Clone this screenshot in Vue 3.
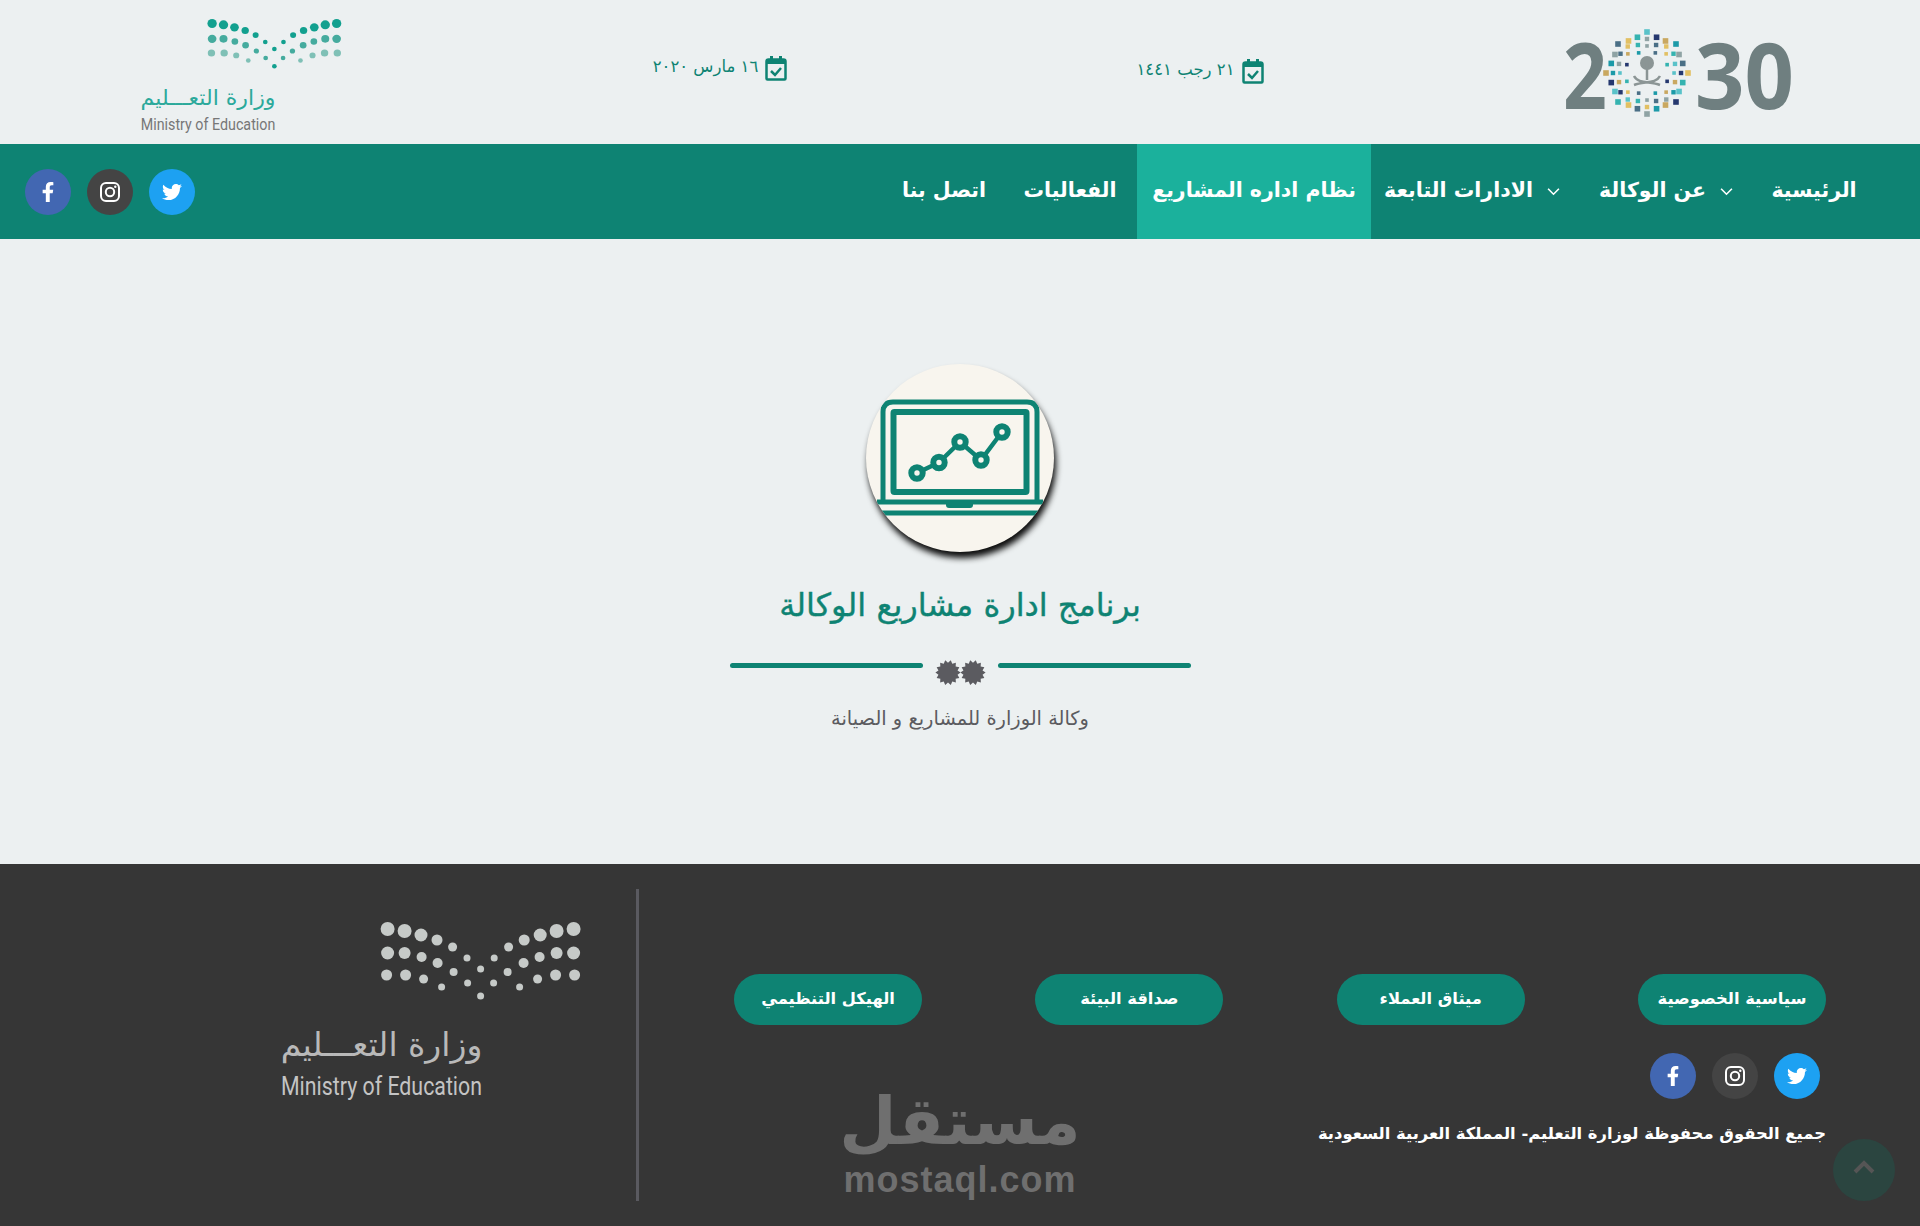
<script setup>
const half = [
  [93, 0, 7], [76, 2, 7], [59.6, 6, 6.5], [43.6, 11, 5.5], [28, 18, 4.5], [13.6, 29, 3.5],
  [93, 24, 6.5], [76, 24, 6], [59, 28, 5], [43, 34, 5], [27, 43, 4], [13, 54, 3.5],
  [94, 46, 5.5], [75, 46, 5.5], [57, 50, 4.5], [39, 58, 3.5]
]
const logoDots = [
  ...half.map(([x, y, r], i) => ({ x: 230.6 - x, y: 29 + y, r, row: i < 6 ? 1 : i < 12 ? 2 : 3 })),
  ...half.map(([x, y, r], i) => ({ x: 230.6 + x, y: 29 + y, r, row: i < 6 ? 1 : i < 12 ? 2 : 3 })),
  { x: 230.6, y: 96, r: 3.5, row: 1 },
  { x: 230.6, y: 69, r: 3.5, row: 1 }
]

const palette = ['#1c9aa8', '#e2c063', '#25386f', '#8fa3a4', '#35b3b0', '#c9a860', '#4a6f86', '#59c2c9']
const emblem = []
let colour = 0
;[[0.66, 16, 3.6], [0.83, 20, 4.4], [1, 24, 5.6]].forEach(([layer, n, s]) => {
  for (let i = 0; i < n; i++) {
    const t = (i / n) * Math.PI * 2
    const r = layer * (33 + 8 * Math.abs(Math.cos(4 * t)))
    colour += 3
    emblem.push({
      x: 87 + r * Math.sin(t) - s / 2,
      y: 43 - r * Math.cos(t) - s / 2,
      c: palette[colour % palette.length],
      s
    })
  }
})

const gear = (cx, cy) => {
  const pts = []
  for (let i = 0; i < 28; i++) {
    const a = (i / 28) * Math.PI * 2
    const r = i % 2 ? 9.8 : 12.6
    pts.push(`${(cx + r * Math.cos(a)).toFixed(2)},${(cy + r * Math.sin(a)).toFixed(2)}`)
  }
  return pts.join(' ')
}
const gearLeft = gear(13, 12.6)
const gearRight = gear(38, 12.6)

const links = ['سياسية الخصوصية', 'ميثاق العملاء', 'صداقة البيئة', 'الهيكل التنظيمي']
const chart = [[51, 109], [73, 98.5], [94, 78], [115, 96], [136, 68]]
const chartLine = chart.map(p => p.join(',')).join(' ')
</script>

<template>
  <div class="page" dir="rtl">
    <header class="top">
      <div class="top-col">
        <svg class="vision" viewBox="0 0 240 100" aria-label="2030">
          <text x="3" y="79" class="vision-num" textLength="44" lengthAdjust="spacingAndGlyphs">2</text>
          <text x="135" y="79" class="vision-num" textLength="99" lengthAdjust="spacingAndGlyphs">30</text>
          <rect v-for="(d, i) in emblem" :key="i" :x="d.x" :y="d.y" :width="d.s" :height="d.s" :fill="d.c" />
          <circle cx="87" cy="33" r="7" fill="#8b9595" />
          <path d="M87 33v17M74 46c4 8 16 5 26 9M100 46c-4 8-16 5-26 9" fill="none" stroke="#8b9595" stroke-width="2.500" />
        </svg>
      </div>
      <div class="top-col">
        <div class="date date-hijri">
          <svg class="cal" viewBox="0 0 22 25">
            <path d="M5 0h3v4H5zM14 0h3v4h-3z" fill="#0e8373" />
            <path d="M1.5 5.5q0-2 2-2h15q2 0 2 2v17q0 1-1 1H2.500q-1 0-1-1z" fill="none" stroke="#0e8373" stroke-width="2.500" />
            <path d="M1.500 4h19v4h-19z" fill="#0e8373" />
            <path d="M6 15l4 4 6-7" fill="none" stroke="#0e8373" stroke-width="2.500" />
          </svg>
          <span>٢١ رجب ١٤٤١</span>
        </div>
      </div>
      <div class="top-col">
        <div class="date date-greg">
          <svg class="cal" viewBox="0 0 22 25">
            <path d="M5 0h3v4H5zM14 0h3v4h-3z" fill="#0e8373" />
            <path d="M1.5 5.5q0-2 2-2h15q2 0 2 2v17q0 1-1 1H2.500q-1 0-1-1z" fill="none" stroke="#0e8373" stroke-width="2.500" />
            <path d="M1.500 4h19v4h-19z" fill="#0e8373" />
            <path d="M6 15l4 4 6-7" fill="none" stroke="#0e8373" stroke-width="2.500" />
          </svg>
          <span>١٦ مارس ٢٠٢٠</span>
        </div>
      </div>
      <div class="top-col top-logo">
        <svg class="logo logo-light" viewBox="0 0 360 230" preserveAspectRatio="none">
          <circle v-for="(d, i) in logoDots" :key="i" :cx="d.x" :cy="d.y" :r="d.r" :class="'row' + d.row" />
          <text x="131.500" y="156" class="logo-ar">وزارة التعـــليم</text>
          <text x="31" y="195" class="logo-en" textLength="201" lengthAdjust="spacingAndGlyphs">Ministry of Education</text>
        </svg>
      </div>
    </header>

    <nav class="nav">
      <ul class="menu">
        <li class="item item-home"><span>الرئيسية</span></li>
        <li class="item item-about">
          <svg class="chev" viewBox="0 0 12 8"><path d="M1 1.500l5 5 5-5" /></svg>
          <span>عن الوكالة</span>
        </li>
        <li class="item item-depts">
          <svg class="chev" viewBox="0 0 12 8"><path d="M1 1.500l5 5 5-5" /></svg>
          <span>الادارات التابعة</span>
        </li>
        <li class="item item-active"><span>نظام اداره المشاريع</span></li>
        <li class="item item-events"><span>الفعاليات</span></li>
        <li class="item item-contact"><span>اتصل بنا</span></li>
      </ul>
      <div class="socials nav-socials">
        <span class="soc soc-tw"><svg viewBox="0 0 512 512"><path d="M459.37 151.716c.325 4.548.325 9.097.325 13.645 0 138.72-105.583 298.558-298.558 298.558-59.452 0-114.68-17.219-161.137-47.106 8.447.974 16.568 1.299 25.34 1.299 49.055 0 94.213-16.568 130.274-44.832-46.132-.975-84.792-31.188-98.112-72.772 6.498.974 12.995 1.624 19.818 1.624 9.421 0 18.843-1.3 27.614-3.573-48.081-9.747-84.143-51.98-84.143-102.985v-1.299c13.969 7.797 30.214 12.67 47.431 13.319-28.264-18.843-46.781-51.005-46.781-87.391 0-19.492 5.197-37.36 14.294-52.954 51.655 63.675 129.3 105.258 216.365 109.807-1.624-7.797-2.599-15.918-2.599-24.04 0-57.828 46.782-104.934 104.934-104.934 30.213 0 57.502 12.67 76.67 33.137 23.715-4.548 46.456-13.32 66.599-25.34-7.798 24.366-24.366 44.833-46.132 57.827 21.117-2.273 41.584-8.122 60.426-16.243-14.292 20.791-32.161 39.308-52.628 54.253z" /></svg></span>
        <span class="soc soc-ig"><svg viewBox="0 0 24 24"><rect x="3" y="3" width="18" height="18" rx="5" class="ig" /><circle cx="12" cy="12" r="4.200" class="ig" /><circle cx="17.300" cy="6.700" r="1.200" /></svg></span>
        <span class="soc soc-fb"><svg viewBox="0 0 320 512"><path d="M279.14 288l14.22-92.66h-88.91v-60.13c0-25.35 12.42-50.06 52.24-50.06h40.42V6.26S260.43 0 225.36 0c-73.22 0-121.08 44.38-121.08 124.72v70.62H22.89V288h81.39v224h100.17V288z" /></svg></span>
      </div>
    </nav>

    <main class="main">
      <div class="badge">
        <svg viewBox="0 0 188 188">
          <path d="M17 136V48q0-10 10-10h134q10 0 10 10v88" class="lap" />
          <rect x="27.500" y="48" width="133" height="80" rx="1" class="lap lap-screen" />
          <path d="M11 138h166M15 149h158" class="lap" />
          <path d="M80 139h27v2q0 3-3 3H83q-3 0-3-3z" fill="#0e8373" />
          <polyline :points="chartLine" class="lap lap-chart" />
          <circle v-for="(p, i) in chart" :key="i" :cx="p[0]" :cy="p[1]" r="5.700" class="lap-dot" />
        </svg>
      </div>
      <h1 class="title">برنامج ادارة مشاريع الوكالة</h1>
      <div class="divider">
        <span class="rule"></span>
        <svg class="gears" viewBox="0 0 51 26">
          <polygon :points="gearLeft" />
          <polygon :points="gearRight" />
        </svg>
        <span class="rule"></span>
      </div>
      <p class="sub">وكالة الوزارة للمشاريع و الصيانة</p>
    </main>

    <footer class="footer">
      <div class="foot-main">
        <div class="foot-links">
          <a v-for="l in links" :key="l" class="pill"><span>{{ l }}</span></a>
        </div>
        <div class="socials foot-socials">
          <span class="soc soc-tw"><svg viewBox="0 0 512 512"><path d="M459.37 151.716c.325 4.548.325 9.097.325 13.645 0 138.72-105.583 298.558-298.558 298.558-59.452 0-114.68-17.219-161.137-47.106 8.447.974 16.568 1.299 25.34 1.299 49.055 0 94.213-16.568 130.274-44.832-46.132-.975-84.792-31.188-98.112-72.772 6.498.974 12.995 1.624 19.818 1.624 9.421 0 18.843-1.3 27.614-3.573-48.081-9.747-84.143-51.98-84.143-102.985v-1.299c13.969 7.797 30.214 12.67 47.431 13.319-28.264-18.843-46.781-51.005-46.781-87.391 0-19.492 5.197-37.36 14.294-52.954 51.655 63.675 129.3 105.258 216.365 109.807-1.624-7.797-2.599-15.918-2.599-24.04 0-57.828 46.782-104.934 104.934-104.934 30.213 0 57.502 12.67 76.67 33.137 23.715-4.548 46.456-13.32 66.599-25.34-7.798 24.366-24.366 44.833-46.132 57.827 21.117-2.273 41.584-8.122 60.426-16.243-14.292 20.791-32.161 39.308-52.628 54.253z" /></svg></span>
          <span class="soc soc-ig"><svg viewBox="0 0 24 24"><rect x="3" y="3" width="18" height="18" rx="5" class="ig" /><circle cx="12" cy="12" r="4.200" class="ig" /><circle cx="17.300" cy="6.700" r="1.200" /></svg></span>
          <span class="soc soc-fb"><svg viewBox="0 0 320 512"><path d="M279.14 288l14.22-92.66h-88.91v-60.13c0-25.35 12.42-50.06 52.24-50.06h40.42V6.26S260.43 0 225.36 0c-73.22 0-121.08 44.38-121.08 124.72v70.62H22.89V288h81.39v224h100.17V288z" /></svg></span>
        </div>
        <p class="copy">جميع الحقوق محفوظة لوزارة التعليم- المملكة العربية السعودية</p>
      </div>
      <div class="foot-logo">
        <svg class="logo logo-dark" viewBox="0 0 360 230">
          <circle v-for="(d, i) in logoDots" :key="i" :cx="d.x" :cy="d.y" :r="d.r" />
          <text x="131.500" y="156" class="logo-ar">وزارة التعـــليم</text>
          <text x="31" y="195" class="logo-en" textLength="201" lengthAdjust="spacingAndGlyphs">Ministry of Education</text>
        </svg>
      </div>
      <div class="watermark">
        <span class="wm-ar">مستقل</span>
        <span class="wm-en" dir="ltr">mostaql.com</span>
      </div>
      <button class="to-top" aria-label="top">
        <svg viewBox="0 0 24 16"><path d="M3 13l9-9 9 9" /></svg>
      </button>
    </footer>
  </div>
</template>

<style>
html, body { margin: 0; padding: 0; background: #ecf0f1; }
</style>

<style scoped>
.page {
  width: 1920px;
  height: 1226px;
  display: flex;
  flex-direction: column;
  background: #ecf0f1;
  font-family: "DejaVu Sans", "Noto Sans", sans-serif;
  overflow: hidden;
}

/* top band */
.top { height: 144px; display: grid; grid-template-columns: repeat(4, 480px); }
.top-col { display: flex; justify-content: center; align-items: flex-start; }
.vision { width: 240px; height: 100px; margin-top: 30px; direction: ltr; overflow: visible; }
.vision-num { font-family: "Open Sans", sans-serif; font-weight: 700; font-size: 92px; fill: #6f7f80; }
.date { display: flex; align-items: center; gap: 7px; color: #0e8373; font-size: 16.500px; }
.date span { padding-bottom: 4px; }
.date-hijri { margin-top: 59px; }
.date-greg { margin-top: 56px; }
.cal { width: 22px; height: 25px; flex: none; }
.logo { display: block; direction: ltr; overflow: visible; }
.top-logo { padding-top: 5px; }
.logo-light { width: 241px; height: 147px; }
.logo-dark { width: 360px; height: 230px; }
.logo-ar { font-family: "DejaVu Sans", sans-serif; font-size: 33px; direction: rtl; text-anchor: middle; }
.logo-en { font-family: "Roboto", sans-serif; font-size: 25px; }
.logo-light .row1 { fill: #12a08f; }
.logo-light .row2 { fill: #45ab9e; }
.logo-light .row3 { fill: #7fc0b6; }
.logo-light .logo-ar { fill: #2ba99b; }
.logo-light .logo-en { fill: #777; }
.logo-dark circle { fill: #c6cac8; }
.logo-dark .logo-ar { fill: #b9b9b9; }
.logo-dark .logo-en { fill: #c4c4c4; }

/* nav */
.nav {
  height: 95px;
  background: #0e8373;
  display: flex;
  justify-content: space-between;
  align-items: center;
  padding: 0 44px 0 25px;
}
.menu { list-style: none; margin: 0; padding: 0; display: flex; height: 100%; }
.item {
  display: flex;
  align-items: center;
  justify-content: center;
  gap: 14px;
  color: #fff;
  font-size: 20.500px;
  font-weight: 700;
  white-space: nowrap;
}
.item span { padding-bottom: 4px; }
.item-home { width: 124px; }
.item-about { width: 173px; justify-content: flex-start; padding-right: 19px; box-sizing: border-box; }
.item-depts { width: 208px; justify-content: flex-start; padding-right: 19px; box-sizing: border-box; }
.item-active { width: 234px; background: #1bb19c; }
.item-events { width: 134px; }
.item-contact { width: 118px; }
.chev { width: 13px; height: 9px; fill: none; stroke: #fff; stroke-width: 1.500; flex: none; }

.socials { display: flex; gap: 16px; }
.soc {
  width: 46px;
  height: 46px;
  border-radius: 50%;
  display: flex;
  align-items: center;
  justify-content: center;
}
.soc svg { height: 20px; width: 20px; fill: #fff; }
.soc-ig svg { height: 24px; width: 24px; }
.soc-tw { background: #1da1f2; }
.soc-ig { background: #444; }
.soc-fb { background: #4267b2; }
.ig { fill: none; stroke: #fff; stroke-width: 2; }

/* main */
.main {
  height: 625px;
  box-sizing: border-box;
  padding-top: 125px;
  display: flex;
  flex-direction: column;
  align-items: center;
}
.badge {
  width: 188px;
  height: 188px;
  border-radius: 50%;
  background: #f8f5ee;
  box-shadow: 2px 6px 6px rgba(0, 0, 0, 0.95);
  overflow: hidden;
}
.badge svg { display: block; width: 188px; height: 188px; }
.lap { fill: none; stroke: #0e8373; stroke-width: 5; }
.lap-screen { stroke-width: 6; }
.lap-chart { stroke-width: 4.500; }
.lap-dot { fill: #f8f5ee; stroke: #0e8373; stroke-width: 6; }
.title {
  margin: 33px 0 0;
  color: #0e8373;
  font-size: 32px;
  line-height: 40px;
  font-weight: 400;
  -webkit-text-stroke: 0.400px #0e8373;
}
.divider { display: flex; align-items: flex-start; gap: 12px; margin-top: 35px; }
.rule { width: 193px; height: 5px; margin-top: 3px; background: #0e8373; border-radius: 3px; }
.gears { width: 51px; height: 26px; fill: #5b5b60; }
.sub { margin: 21px 0 0; color: #5b5b60; font-size: 19.400px; line-height: 24px; }

/* footer */
.footer {
  position: relative;
  flex: 1;
  background: #363636;
  display: flex;
  padding: 25px 0;
}
.foot-main {
  width: 1284px;
  flex: none;
  box-sizing: border-box;
  border-left: 3px solid #5a5a60;
  padding: 85px 94px 0 95px;
  display: flex;
  flex-direction: column;
}
.foot-links { display: flex; justify-content: space-between; }
.pill {
  width: 188px;
  height: 51px;
  border-radius: 26px;
  background: #0e8373;
  color: #fff;
  display: flex;
  align-items: center;
  justify-content: center;
  font-size: 16.300px;
  font-weight: 700;
}
.pill span { padding-bottom: 3px; }
.foot-socials { margin: 28px 6px 0 0; }
.copy { margin: 23px 0 0; color: #fff; font-size: 16.400px; font-weight: 700; line-height: 24px; white-space: nowrap; }
.foot-logo { padding: 11px 26px 0 250px; }
.watermark {
  position: absolute;
  left: 845px;
  top: 218px;
  width: 230px;
  display: flex;
  flex-direction: column;
  align-items: center;
  color: #6f6f6f;
  font-weight: 700;
}
.wm-ar { font-size: 66px; line-height: 80px; }
.wm-en { font-family: "Liberation Sans", sans-serif; font-size: 36px; line-height: 36px; letter-spacing: 1px; }
.to-top {
  position: absolute;
  right: 25px;
  top: 275px;
  width: 62px;
  height: 62px;
  border: 0;
  padding: 0;
  border-radius: 50%;
  background: #2b4540;
  display: flex;
  align-items: flex-start;
  justify-content: center;
}
.to-top svg { width: 24px; height: 16px; margin-top: 20px; fill: none; stroke: #555; stroke-width: 4; }
</style>
